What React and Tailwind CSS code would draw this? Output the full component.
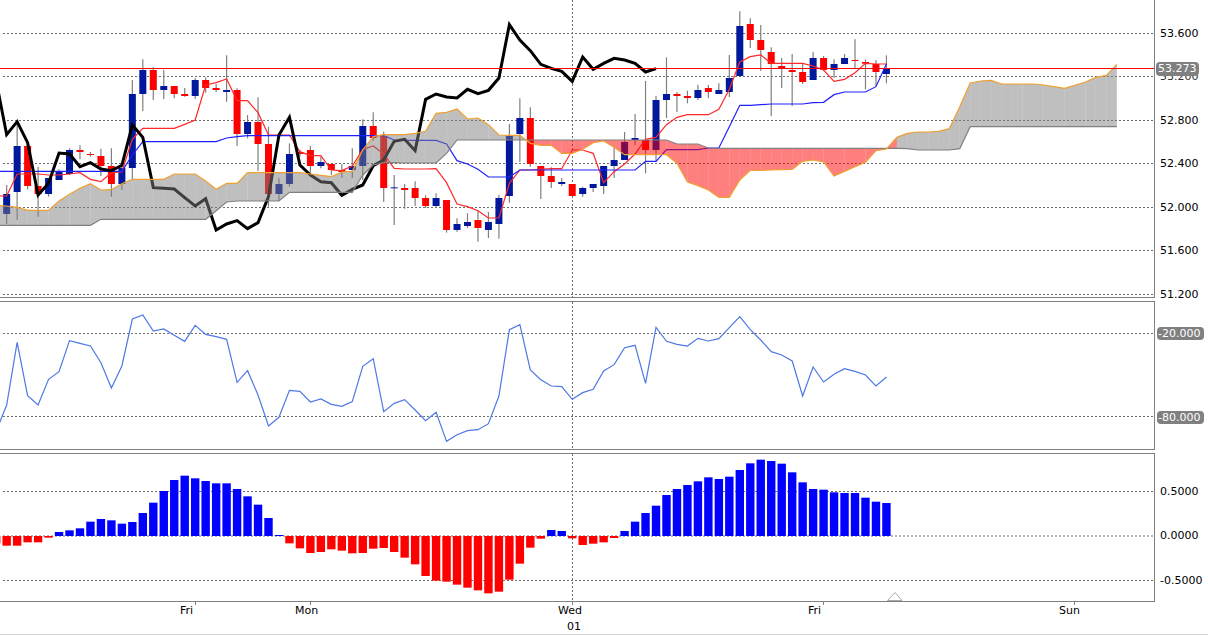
import React from 'react';

// all y values are read off a 3x crop, so they get divided by 3 when drawn
const rep = (v, n) => Array(n).fill(v);
const X = (i) => (20 + 31.42 * i) / 3;
const line = (ys, start, off = 0) =>
  ys.map((y, k) => `${X(k + start).toFixed(2)},${(off + y / 3).toFixed(2)}`).join(' ');

// [high, low, bodyTop, bodyBottom, up?]
const CANDLES = [
  [555, 672, 582, 642, 1], [365, 660, 438, 576, 1], [438, 568, 438, 558, 0], [500, 650, 558, 582, 0],
  [534, 590, 534, 582, 1], [508, 540, 516, 540, 1], [445, 525, 450, 522, 1], [436, 478, 450, 456, 0],
  [456, 470, 462, 465, 0], [446, 528, 468, 498, 0], [445, 590, 498, 552, 0], [490, 570, 504, 552, 1],
  [240, 540, 282, 504, 1], [178, 333, 210, 282, 1], [202, 300, 210, 270, 0], [210, 297, 258, 270, 1],
  [258, 295, 258, 282, 0], [264, 290, 282, 288, 0], [234, 297, 240, 288, 1], [232, 278, 240, 264, 0],
  [252, 276, 264, 270, 0], [166, 305, 270, 276, 1], [265, 438, 270, 402, 0], [345, 415, 366, 402, 1],
  [292, 513, 366, 432, 0], [380, 620, 432, 582, 0], [535, 603, 552, 582, 1], [430, 560, 462, 552, 1],
  [450, 470, 456, 462, 0], [438, 518, 450, 498, 0], [470, 505, 486, 498, 1], [490, 525, 492, 510, 0],
  [492, 534, 510, 516, 0], [445, 535, 498, 510, 1], [358, 540, 378, 498, 1], [337, 422, 378, 414, 0],
  [395, 606, 408, 564, 0], [525, 675, 562, 564, 1], [552, 626, 564, 570, 0], [544, 618, 564, 594, 0],
  [586, 624, 594, 618, 0], [580, 624, 594, 618, 1], [600, 698, 600, 690, 0], [655, 695, 672, 690, 1],
  [640, 684, 666, 678, 1], [630, 725, 660, 684, 0], [636, 714, 666, 690, 1], [584, 716, 594, 672, 1],
  [372, 608, 408, 588, 1], [295, 486, 354, 402, 1], [322, 500, 354, 492, 0], [498, 597, 498, 528, 0],
  [502, 564, 528, 546, 0], [534, 558, 546, 552, 1], [552, 590, 552, 588, 0], [560, 590, 564, 582, 1],
  [552, 576, 552, 564, 1], [498, 582, 498, 558, 1], [442, 534, 480, 498, 1], [396, 480, 426, 480, 1],
  [342, 435, 414, 420, 1], [243, 520, 420, 450, 0], [288, 486, 300, 450, 1], [172, 354, 282, 300, 1],
  [276, 336, 282, 288, 0], [272, 310, 288, 294, 0], [254, 300, 270, 294, 1], [255, 294, 264, 276, 0],
  [250, 282, 270, 282, 1], [165, 291, 234, 276, 1], [34, 228, 78, 228, 1], [55, 144, 72, 120, 0],
  [75, 212, 120, 150, 0], [142, 348, 156, 192, 0], [174, 264, 198, 204, 0], [162, 318, 210, 216, 0],
  [190, 252, 216, 246, 0], [156, 240, 174, 240, 1], [168, 212, 174, 210, 0], [178, 234, 192, 210, 1],
  [162, 192, 174, 192, 1], [118, 205, 180, 183, 0], [178, 268, 186, 191, 0], [180, 258, 192, 216, 0],
  [166, 250, 204, 222, 1],
];

// cloud arrays start one bar left of the window (i = -1)
const SPAN_A = [
  616, 618, 622, 631, 631, 631, 603, 583, 565, 551, 570, 569, 551, 538, 538, 538, 538, 522, 522, 522, 543, 568, 550,
  550, 518, 518, 518, 518, 518, 518, 522, 526, 530, 516, 514, 450, 410, 404, 404, 404, 400, 394, 340, 337, 327, 357,
  354, 374, 405, 406, 406, 430, 436, 436, 460, 460, 448, 428, 423, 442, 464, 464, 464, 464, 464, 490, 546, 557, 570,
  592, 592, 540, 511, 511, 510, 509, 508, 484, 480, 486, 528, 514, 500, 487, 452, 447, 412, 400, 396, 396, 394, 386,
  320, 249, 243, 241, 252, 252, 252, 252, 255, 260, 265, 256, 246, 232, 226, 193,
];
const SPAN_B = [
  ...rep(676, 10), ...rep(658, 11), 632, 606, ...rep(603, 5), ...rep(577, 7), 525, 495, 488, 488, ...rep(489, 4), 460,
  ...rep(420, 21), ...rep(432, 3), 444, ...rep(445, 18), 446, ...rep(450, 4), 446, ...rep(380, 15),
];
const TENKAN = [
  588, 588, 522, 522, 522, 525, 525, 522, 518, 538, 545, 518, 516, 418, 385, 385, 385, 385, 373, 360, 255, 248, 237,
  302, 302, 338, 405, 405, 405, 455, 467, 467, 510, 512, 498, 448, 438, 462, 505, 507, 507, 507, 506, 548, 612, 620,
  632, 654, 654, 550, 510, 510, 508, 506, 506, 450, 450, 460, 548, 515, 492, 462, 418, 412, 374, 352, 344, 344, 344,
  328, 268, 186, 170, 165, 190, 190, 190, 190, 198, 210, 244, 238, 218, 190, 192, 192,
];
const KIJUN = [
  ...rep(514, 13), 465, ...rep(425, 8), 414, 410, ...rep(407, 14), 420, ...rep(421, 4), 432, 482, 492, 508, 531, 531,
  531, ...rep(510, 12), 484, 484, ...rep(449, 4), 444, 444, 380, 316, 316, 314, ...rep(312, 4), 308, 307, 284, 276,
  276, 276, 260, 192,
];
const CHIKOU = [
  243, 404, 365, 428, 585, 550, 459, 462, 500, 488, 507, 512, 496, 375, 412, 563, 565, 567, 593, 618, 596, 690, 672,
  662, 686, 668, 590, 405, 352, 495, 525, 545, 548, 586, 568, 555, 497, 480, 424, 418, 452, 298, 282, 291, 294, 268,
  281, 271, 234, 74, 120, 152, 193, 205, 214, 244, 171, 208, 190, 175, 180, 190, 216, 206,
];
const WPR = [
  408, 330, 142, 302, 330, 253, 230, 137, 145, 153, 203, 279, 213, 72, 60, 108, 102, 121, 139, 91, 118, 125, 133, 262,
  227, 300, 393, 367, 286, 289, 321, 312, 328, 334, 320, 214, 191, 350, 325, 314, 345, 377, 352, 439, 419, 407, 404,
  386, 303, 104, 89, 225, 254, 273, 275, 313, 293, 283, 228, 209, 158, 151, 265, 97, 139, 148, 153, 130, 138, 131, 98,
  65, 104, 135, 170, 180, 198, 303, 216, 261, 238, 221, 229, 240, 273, 246,
];
const HIST = [
  -22, -29, -29, -19, -19, -5, 12, 17, 23, 43, 51, 47, 37, 42, 69, 100, 135, 168, 181, 173, 165, 158, 158, 141, 119,
  94, 54, 3, -22, -37, -51, -48, -40, -44, -52, -51, -38, -36, -48, -65, -85, -120, -134, -137, -146, -155, -163, -172,
  -167, -131, -83, -35, -8, 18, 15, -7, -27, -23, -19, -6, 15, 43, 69, 91, 123, 141, 153, 164, 176, 171, 178, 198, 218,
  229, 225, 217, 191, 161, 141, 139, 131, 129, 129, 115, 103, 99,
];

const GridLine = ({ y }) => (
  <line x1="3" x2="1154" y1={y} y2={y} stroke="#6e6e6e" strokeWidth="1" strokeDasharray="2 2" />
);
const SepLine = ({ y1, y2 }) => (
  <line x1="572.5" x2="572.5" y1={y1} y2={y2} stroke="#6e6e6e" strokeWidth="1" strokeDasharray="2 2" />
);

const PriceChart = () => (
  <svg viewBox="0 0 1154 297" className="block h-full w-full">
    {[33.5, 76.5, 120.5, 163.5, 207.5, 250.5, 294.5].map((y) => (
      <GridLine key={y} y={y} />
    ))}
    <SepLine y1={0} y2={297} />
    {CANDLES.map(([hi, lo, top, bot, up], i) => (
      <g key={i}>
        <line x1={X(i)} x2={X(i)} y1={hi / 3} y2={lo / 3} stroke="#808080" strokeWidth="1.2" />
        <rect
          x={X(i) - 3.5}
          y={top / 3}
          width="7"
          height={Math.max((bot - top) / 3, 1)}
          fill={up ? '#00189c' : '#ff0000'}
        />
      </g>
    ))}
    <polyline points={line(TENKAN, -1)} fill="none" stroke="#ff2828" strokeWidth="1.2" />
    <polyline points={line(KIJUN, -1)} fill="none" stroke="#2020ff" strokeWidth="1.2" />
    <polyline points={line(CHIKOU, -1)} fill="none" stroke="#000000" strokeWidth="3" />
    {/* cloud goes over the candles, half see-through */}
    {SPAN_A.slice(0, -1).map((a, k) => (
      <polygon
        key={k}
        points={`${X(k - 1)},${a / 3} ${X(k)},${SPAN_A[k + 1] / 3} ${X(k)},${SPAN_B[k + 1] / 3} ${X(k - 1)},${SPAN_B[k] / 3}`}
        fill={a < SPAN_B[k] ? 'rgba(128,128,128,0.5)' : 'rgba(255,0,0,0.5)'}
      />
    ))}
    <polyline points={line(SPAN_B, -1)} fill="none" stroke="#808080" strokeWidth="1.2" />
    <polyline points={line(SPAN_A, -1)} fill="none" stroke="#f0a030" strokeWidth="1.2" />
    <line x1="0" x2="1154" y1="68.5" y2="68.5" stroke="#ff0000" strokeWidth="1" />
  </svg>
);

const WprChart = () => (
  <svg viewBox="0 302 1154 147" className="block h-full w-full">
    <GridLine y={333.5} />
    <GridLine y={416.5} />
    <SepLine y1={302} y2={449} />
    <polyline points={line(WPR, -1, 295)} fill="none" stroke="#4f78e6" strokeWidth="1.2" />
  </svg>
);

const MacdChart = () => (
  <svg viewBox="0 454 1154 147" className="block h-full w-full">
    <GridLine y={491.5} />
    <GridLine y={536} />
    <GridLine y={580.5} />
    <SepLine y1={454} y2={601} />
    {HIST.map((v, k) => {
      const h = Math.abs(v) / 3;
      return (
        <rect
          key={k}
          x={X(k - 1) - 4.2}
          y={v > 0 ? 536 - h : 536}
          width="8.4"
          height={h}
          fill={v > 0 ? '#0000ff' : '#ff0000'}
        />
      );
    })}
    <polygon points="895,592.5 887.5,600.5 902,600.5" fill="#ffffff" stroke="#a8a8a8" strokeWidth="1" />
  </svg>
);

const Tick = ({ children }) => <div className="flex h-0 items-center">{children}</div>;

const Badge = ({ children }) => (
  <span className="-ml-[3px] rounded-sm bg-[#808080] pl-px pr-1 leading-[13px] text-white">{children}</span>
);

export default function App() {
  return (
    <div className="flex h-[636px] w-[1208px] flex-col overflow-hidden bg-white font-['DejaVu_Sans',sans-serif] text-[11px] text-black">
      {/* price pane */}
      <div className="flex h-[298px]">
        <div className="w-[1155px] border-b border-r border-[#808080]">
          <PriceChart />
        </div>
        <div className="relative flex flex-1 flex-col justify-between pb-[3px] pl-[5px] pt-[34px]">
          <Tick>53.600</Tick>
          <Tick>
            <span className="text-[#333]">53.200</span>
          </Tick>
          <Tick>52.800</Tick>
          <Tick>52.400</Tick>
          <Tick>52.000</Tick>
          <Tick>51.600</Tick>
          <Tick>51.200</Tick>
          {/* last price sits on top of the 53.200 label, like the reference */}
          <div className="absolute left-px top-[62px] rounded-sm bg-[#808080] px-0.5 leading-[14px] text-white">
            53.273
          </div>
        </div>
      </div>

      {/* %R pane */}
      <div className="mt-[3px] flex h-[149px]">
        <div className="w-[1155px] border-b border-r border-t border-[#808080]">
          <WprChart />
        </div>
        <div className="flex flex-1 flex-col justify-between pb-[33px] pl-[5px] pt-[32px]">
          <Tick>
            <Badge>-20.000</Badge>
          </Tick>
          <Tick>
            <Badge>-80.000</Badge>
          </Tick>
        </div>
      </div>

      {/* histogram pane */}
      <div className="mt-[3px] flex h-[149px]">
        <div className="w-[1155px] border-b border-r border-t border-[#808080]">
          <MacdChart />
        </div>
        <div className="flex flex-1 flex-col justify-between pb-[21px] pl-[5px] pt-[39px]">
          <Tick>0.5000</Tick>
          <Tick>0.0000</Tick>
          <Tick>-0.5000</Tick>
        </div>
      </div>

      {/* time axis */}
      <div className="relative h-[33px] border-b border-[#d4d4d4]">
        <div className="absolute left-[195px] top-0 h-[3px] w-px bg-[#808080]" />
        <div className="absolute left-[310px] top-0 h-[3px] w-px bg-[#808080]" />
        <div className="absolute left-[572px] top-0 h-[3px] w-px bg-[#808080]" />
        <div className="absolute left-[823px] top-0 h-[3px] w-px bg-[#808080]" />
        <div className="absolute left-[1074px] top-0 h-[3px] w-px bg-[#808080]" />
        <span className="absolute left-[180px] top-[1px]">Fri</span>
        <span className="absolute left-[295px] top-[1px]">Mon</span>
        <span className="absolute left-[558px] top-[1px]">Wed</span>
        <span className="absolute left-[567px] top-[17px]">01</span>
        <span className="absolute left-[808px] top-[1px]">Fri</span>
        <span className="absolute left-[1059px] top-[1px]">Sun</span>
      </div>
    </div>
  );
}
